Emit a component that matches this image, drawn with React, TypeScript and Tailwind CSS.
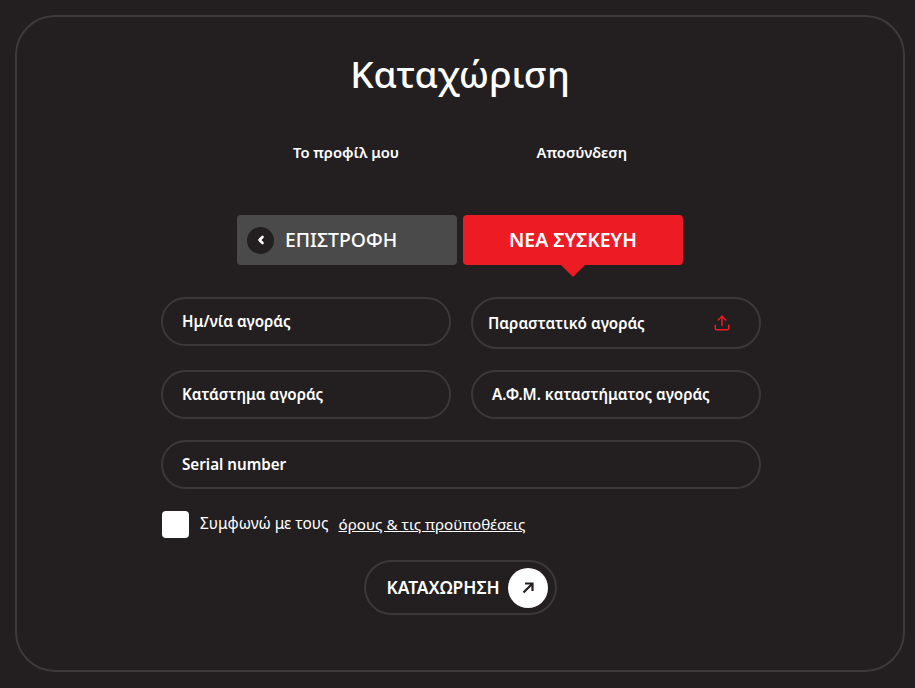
import React from "react";

const F = ({ label, className = "", children }: { label: string; className?: string; children?: React.ReactNode }) => (
  <div className={`flex items-center justify-between rounded-full border-2 border-[#3a3839] text-[15.2px] font-semibold text-white ${className}`}>
    <span>{label}</span>
    {children}
  </div>
);

export default function App() {
  return (
    <div className="h-[688px] w-[915px] overflow-hidden bg-[#231f20] p-[15px] font-['Noto_Sans',sans-serif] text-white">
      <div className="flex h-[657px] w-[890px] flex-col items-center rounded-[40px] border-2 border-[#3c3a3b] pt-[27px]">
        <h1 className="h-[60px] text-[37px] leading-[60px] font-medium">Καταχώριση</h1>
        <div className="mt-[36px] flex h-[24px] w-[334px] items-center justify-between text-[14.8px] font-semibold">
          <span>Το προφίλ μου</span>
          <span>Αποσύνδεση</span>
        </div>
        <div className="mt-[51px] flex gap-[6px]">
          <div className="flex h-[50px] w-[220px] items-center gap-[11px] rounded-[4px] bg-[#4a4a4a] pl-[10px] text-[19.4px] font-medium">
            <span className="flex h-[27px] w-[27px] items-center justify-center rounded-full bg-[#231f20]">
              <svg width="10" height="10" viewBox="0 0 10 10" fill="none" stroke="white" strokeWidth="2.6" strokeLinecap="round" strokeLinejoin="round"><path d="M6.5 2 3.5 5l3 3" /></svg>
            </span>
            ΕΠΙΣΤΡΟΦΗ
          </div>
          <div className="relative flex h-[50px] w-[220px] items-center justify-center rounded-[4px] bg-[#ed1c24] text-[19.4px] font-semibold">
            ΝΕΑ ΣΥΣΚΕΥΗ
            <span className="absolute top-full left-1/2 h-0 w-0 -translate-x-1/2 border-x-[12px] border-t-[12px] border-x-transparent border-t-[#ed1c24]" />
          </div>
        </div>
        <div className="mt-[32px] ml-[2px] grid w-[600px] grid-cols-[290px_290px] gap-x-[20px]">
          <F label="Ημ/νία αγοράς" className="h-[49px] pl-[19px]" />
          <F label="Παραστατικό αγοράς" className="h-[52px] pr-[28px] pl-[15px]">
            <svg width="18" height="18" viewBox="0 0 24 24" fill="none" stroke="#ed1c24" strokeWidth="2" strokeLinecap="round" strokeLinejoin="round"><path d="M21 15v4a2 2 0 0 1-2 2H5a2 2 0 0 1-2-2v-4" /><path d="m17 8-5-5-5 5" /><path d="M12 3v12" /></svg>
          </F>
          <F label="Κατάστημα αγοράς" className="mt-[21px] h-[49px] pl-[19px]" />
          <F label="Α.Φ.Μ. καταστήματος αγοράς" className="mt-[21px] h-[49px] pl-[19px]" />
          <F label="Serial number" className="col-span-2 mt-[21px] h-[49px] pl-[19px]" />
        </div>
        <div className="mt-[21px] ml-[2px] flex h-[28px] w-[600px] items-center pl-px">
          <span className="h-[27px] w-[27px] rounded-[4px] bg-white" />
          <span className="ml-[11px] text-[15.4px]">Συμφωνώ με τους</span>
          <span className="ml-[10px] text-[15.2px] underline">όρους &amp; τις προϋποθέσεις</span>
        </div>
        <div className="mt-[22px] flex h-[55px] w-[193px] items-center justify-between rounded-full border-2 border-[#3a3839] pr-[7px] pl-[21px] text-[17.4px] font-semibold">
          ΚΑΤΑΧΩΡΗΣΗ
          <span className="flex h-[40px] w-[40px] items-center justify-center rounded-full bg-white">
            <svg width="16" height="16" viewBox="0 0 16 16" fill="none" stroke="#231f20" strokeWidth="2.2"><path d="M3.5 12.5 12 4M5 3.5h7.5V11" /></svg>
          </span>
        </div>
      </div>
    </div>
  );
}
